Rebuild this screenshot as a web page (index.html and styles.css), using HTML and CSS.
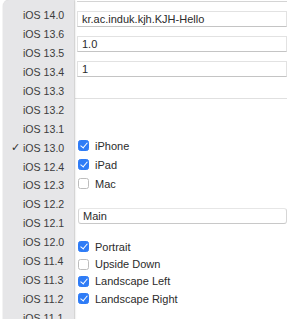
FILE: index.html
```html
<!DOCTYPE html>
<html>
<head>
<meta charset="utf-8">
<link rel="stylesheet" href="styles.css">
</head>
<body>
<div class="stage">
  <div class="form">
    <div class="topline"></div>
    <div class="fields">
      <div class="field">kr.ac.induk.kjh.KJH-Hello</div>
      <div class="field">1.0</div>
      <div class="field">1</div>
    </div>
    <div class="sep"></div>
    <div class="checks devices">
      <div class="check"><span class="box on"></span>iPhone</div>
      <div class="check"><span class="box on"></span>iPad</div>
      <div class="check"><span class="box"></span>Mac</div>
    </div>
    <div class="field combo">Main</div>
    <div class="checks orient">
      <div class="check"><span class="box on"></span>Portrait</div>
      <div class="check"><span class="box"></span>Upside Down</div>
      <div class="check"><span class="box on"></span>Landscape Left</div>
      <div class="check"><span class="box on"></span>Landscape Right</div>
    </div>
  </div>
  <div class="menu">
    <div class="item">iOS 14.0</div>
    <div class="item">iOS 13.6</div>
    <div class="item">iOS 13.5</div>
    <div class="item">iOS 13.4</div>
    <div class="item">iOS 13.3</div>
    <div class="item">iOS 13.2</div>
    <div class="item">iOS 13.1</div>
    <div class="item selected"><span class="tick">✓</span>iOS 13.0</div>
    <div class="item">iOS 12.4</div>
    <div class="item">iOS 12.3</div>
    <div class="item">iOS 12.2</div>
    <div class="item">iOS 12.1</div>
    <div class="item">iOS 12.0</div>
    <div class="item">iOS 11.4</div>
    <div class="item">iOS 11.3</div>
    <div class="item">iOS 11.2</div>
    <div class="item">iOS 11.1</div>
  </div>
</div>
</body>
</html>
```
FILE: styles.css
```css
html, body {
  margin: 0;
  padding: 0;
  background: #ffffff;
}
body {
  font-family: "Liberation Sans", Arial, sans-serif;
  font-size: 11px;
  color: #2b2b2b;
  width: 289px;
  height: 319px;
  overflow: hidden;
}
.stage {
  position: relative;
  width: 289px;
  height: 319px;
  overflow: hidden;
}
.form {
  padding-left: 77px;
  padding-right: 2px;
  display: flex;
  flex-direction: column;
}
.topline {
  height: 1px;
  margin-top: 1px;
  background: #d4d4d4;
}
.fields {
  display: flex;
  flex-direction: column;
  gap: 9px;
  margin-top: 9px;
}
.field {
  box-sizing: border-box;
  height: 16px;
  border: 1px solid #e2e2e2;
  border-bottom-color: #c4c4c4;
  padding-left: 4px;
  line-height: 14px;
  background: #fff;
}
.sep {
  height: 1px;
  background: #e0e0e0;
  margin-top: 21px;
  margin-left: -2px;
}
.checks {
  display: flex;
  flex-direction: column;
}
.devices {
  margin-top: 37px;
}
.devices .check {
  height: 19px;
}
.check {
  display: flex;
  align-items: center;
  padding-left: 1px;
}
.box {
  box-sizing: border-box;
  width: 11px;
  height: 11px;
  border-radius: 2.5px;
  border: 1px solid #bdbdbd;
  background: #fff;
  margin-right: 6px;
  position: relative;
}
.box.on {
  background: #2f7cf6;
  border-color: #2f7cf6;
}
.box.on::after {
  content: "";
  position: absolute;
  left: 3px;
  top: 0px;
  width: 3px;
  height: 6px;
  border: solid #fff;
  border-width: 0 1.6px 1.6px 0;
  transform: rotate(40deg);
}
.combo {
  margin-top: 15px;
  margin-left: 1px;
  border-radius: 3px;
  border-color: #d6d6d6;
  border-top-color: #e6e6e6;
  border-bottom-color: #c8c8c8;
}
.orient {
  margin-top: 14px;
}
.orient .check {
  height: 17.4px;
}
.menu {
  position: absolute;
  left: 3px;
  top: 0;
  width: 71px;
  height: 330px;
  padding-top: 6px;
  background: #e6e6e8;
  border-radius: 6px 0 0 0;
  box-shadow: 1px 0 2px rgba(0,0,0,0.18), 0 0 0 0.5px rgba(0,0,0,0.08);
  color: #3c3c3c;
  font-size: 10.6px;
}
.item {
  height: 18.95px;
  line-height: 18.95px;
  padding-left: 20px;
  position: relative;
}
.tick {
  position: absolute;
  left: 8px;
  top: 0;
  font-family: "DejaVu Sans", sans-serif;
  font-size: 11px;
  font-weight: bold;
  color: #2e2e2e;
}
```
